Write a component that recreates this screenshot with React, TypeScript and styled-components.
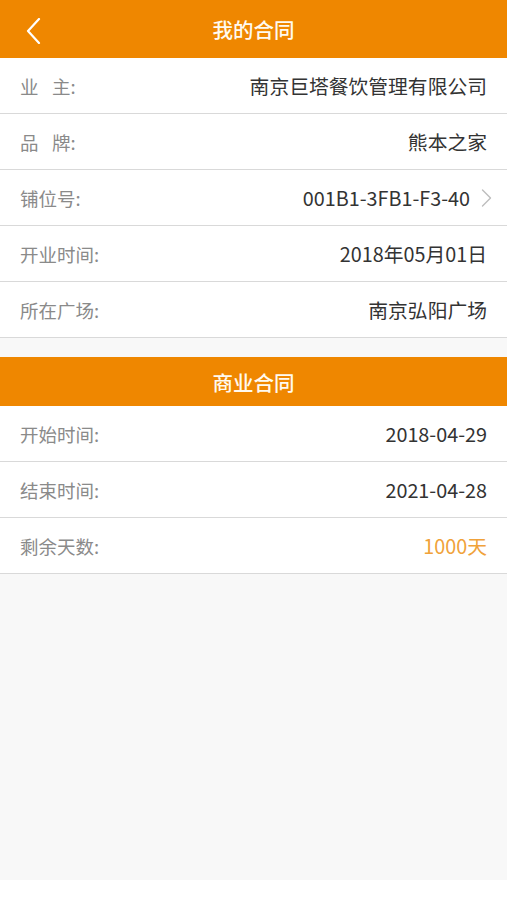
import type { FC } from 'react';
import styled, { createGlobalStyle } from 'styled-components';

const GlobalStyle = createGlobalStyle`
  html, body {
    margin: 0;
    padding: 0;
    background: #ffffff;
    font-family: "Noto Sans CJK SC", "Noto Sans", sans-serif;
  }
`;

const Page = styled.div`
  width: 507px;
  min-height: 880px;
  background: #f8f8f8;
  display: flex;
  flex-direction: column;
`;

const NavBar = styled.div`
  height: 58px;
  background: #ef8700;
  display: flex;
  align-items: center;
  justify-content: center;
  position: relative;
`;

const BackButton = styled.div`
  position: absolute;
  left: 23px;
  top: 17px;
  width: 20px;
  height: 28px;
  display: flex;
  align-items: center;
  justify-content: center;
`;

const Title = styled.div`
  color: #fffaf0;
  font-size: 20.5px;
  font-weight: 500;
`;

const SectionHeader = styled.div`
  height: 49px;
  margin-top: 19px;
  background: #ef8700;
  display: flex;
  align-items: center;
  justify-content: center;
`;

const List = styled.div`
  background: #ffffff;
  display: flex;
  flex-direction: column;
`;

const Row = styled.div`
  height: 55px;
  border-bottom: 1px solid #d9d9d9;
  display: flex;
  align-items: center;
  justify-content: space-between;
  padding: 0 20px;
`;

const Label = styled.span`
  color: #8a8a8a;
  font-size: 18.5px;
  white-space: pre;
`;

const Value = styled.span<{ $accent?: boolean }>`
  color: ${({ $accent }) => ($accent ? '#f0a23a' : '#333333')};
  font-size: 19.8px;
  display: flex;
  align-items: center;
  gap: 11px;
`;

const LinkArrow = styled.span`
  display: flex;
  margin-right: -5px;
`;

type Item = { label: string; value: string; link?: boolean; accent?: boolean };

const shopInfo: Item[] = [
  { label: '业\u2002 主:', value: '南京巨塔餐饮管理有限公司' },
  { label: '品\u2002 牌:', value: '熊本之家' },
  { label: '铺位号:', value: '001B1-3FB1-F3-40', link: true },
  { label: '开业时间:', value: '2018年05月01日' },
  { label: '所在广场:', value: '南京弘阳广场' },
];

const contractInfo: Item[] = [
  { label: '开始时间:', value: '2018-04-29' },
  { label: '结束时间:', value: '2021-04-28' },
  { label: '剩余天数:', value: '1000天', accent: true },
];

const Chevron: FC<{ color: string; w: number; h: number; stroke: number; left?: boolean }> = ({
  color,
  w,
  h,
  stroke,
  left,
}) => (
  <svg width={w} height={h} viewBox={`0 0 ${w} ${h}`} fill="none">
    <path
      d={left ? `M${w - 2} 1 L2 ${h / 2} L${w - 2} ${h - 1}` : `M1.5 1 L${w - 1.5} ${h / 2} L1.5 ${h - 1}`}
      stroke={color}
      strokeWidth={stroke}
      strokeLinecap="round"
      strokeLinejoin="round"
    />
  </svg>
);

const InfoList: FC<{ items: Item[] }> = ({ items }) => (
  <List>
    {items.map((item) => (
      <Row key={item.label}>
        <Label>{item.label}</Label>
        <Value $accent={item.accent}>
          {item.value}
          {item.link && (
            <LinkArrow>
              <Chevron color="#bdbdbd" w={11} h={18} stroke={1.4} />
            </LinkArrow>
          )}
        </Value>
      </Row>
    ))}
  </List>
);

const App: FC = () => (
  <>
    <GlobalStyle />
    <Page>
      <NavBar>
        <BackButton>
          <Chevron color="#ffffff" w={15} h={26} stroke={2.2} left />
        </BackButton>
        <Title>我的合同</Title>
      </NavBar>
      <InfoList items={shopInfo} />
      <SectionHeader>
        <Title>商业合同</Title>
      </SectionHeader>
      <InfoList items={contractInfo} />
    </Page>
  </>
);

export default App;
